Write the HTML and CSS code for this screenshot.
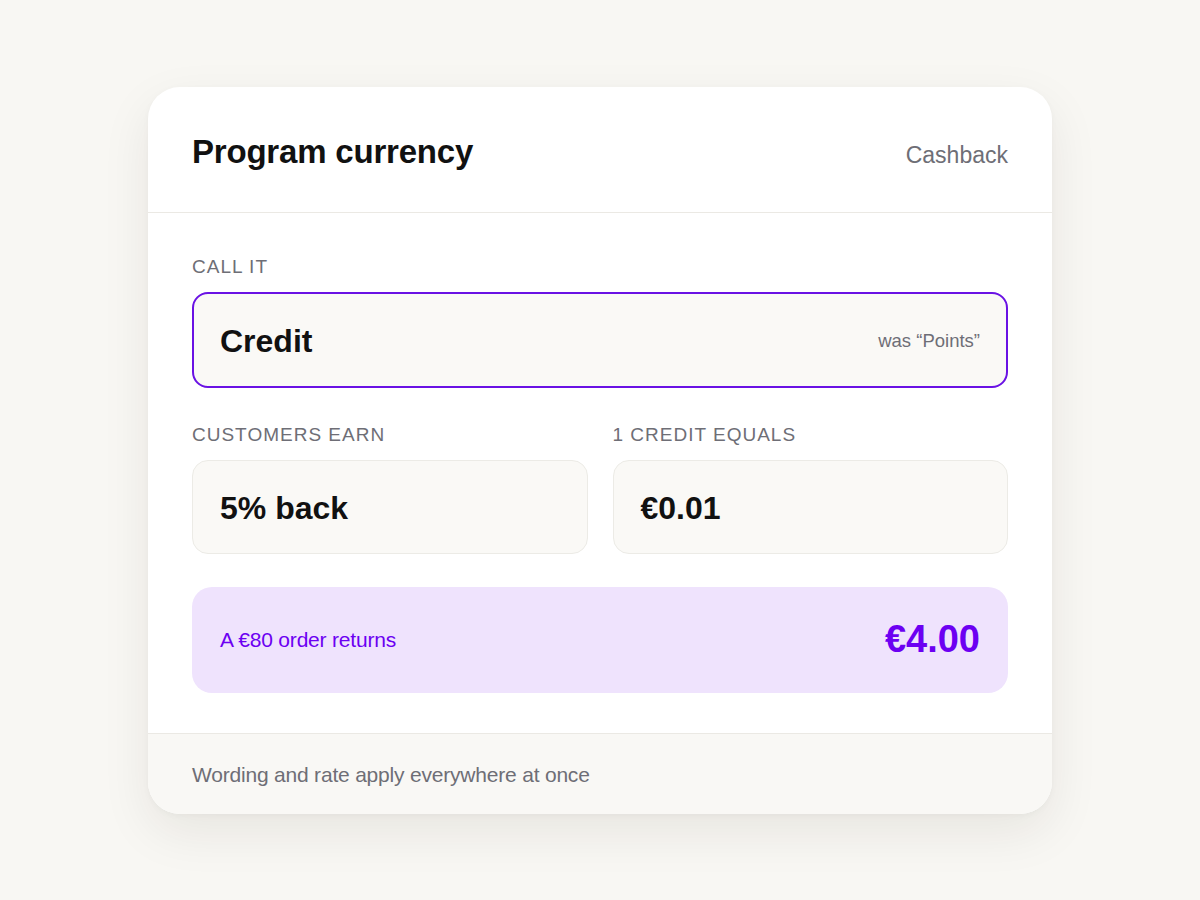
FILE: index.html
```html
<html>
<head>
  <meta charset="UTF-8" />
  <meta name="viewport" content="width=device-width, initial-scale=1.0"/>
  <title>Program currency</title>
  <link rel="stylesheet" href="styles.css">
</head>
<body>
  <div class="card">
    <div class="card-header">
      <h1>Program currency</h1>
      <span class="header-mode">Cashback</span>
    </div>

    <div class="card-body">
      <div class="field">
        <div class="field-label">Call it</div>
        <div class="input input-active">
          <span class="input-value">Credit</span>
          <span class="input-hint">was “Points”</span>
        </div>
      </div>

      <div class="field-row">
        <div class="field">
          <div class="field-label">Customers earn</div>
          <div class="input">
            <span class="input-value">5% back</span>
          </div>
        </div>
        <div class="field">
          <div class="field-label">1 credit equals</div>
          <div class="input">
            <span class="input-value">€0.01</span>
          </div>
        </div>
      </div>

      <div class="preview">
        <span class="preview-label">A €80 order returns</span>
        <span class="preview-amount">€4.00</span>
      </div>
    </div>

    <div class="card-footer">Wording and rate apply everywhere at once</div>
  </div>
</body>
</html>
```

FILE: styles.css
```css
body {
  margin: 0;
  height: 100vh;
  background-color: #f8f7f3;
  font-family: 'Liberation Sans', Arial, sans-serif;
  color: #111;
  display: flex;
  justify-content: center;
  align-items: center;
}

.card {
  width: 904px;
  background: #fff;
  border-radius: 32px;
  box-shadow: 0 18px 50px rgba(40, 30, 10, 0.08), 0 2px 6px rgba(40, 30, 10, 0.03);
  overflow: hidden;
}

.card-header {
  display: flex;
  justify-content: space-between;
  align-items: baseline;
  padding: 45px 44px 40px;
  border-bottom: 1px solid #ebe9e4;
}

h1 {
  margin: 0;
  font-size: 33px;
  line-height: 40px;
  font-weight: 700;
  letter-spacing: -0.2px;
}

.header-mode {
  font-size: 23px;
  color: #6e6e76;
}

.card-body {
  padding: 42px 44px 40px;
}

.field-label {
  font-size: 19px;
  line-height: 24px;
  letter-spacing: 1px;
  text-transform: uppercase;
  color: #6e6e76;
  margin-bottom: 13px;
}

.input {
  height: 94px;
  box-sizing: border-box;
  display: flex;
  justify-content: space-between;
  align-items: center;
  padding: 3px 27px 0;
  background: #faf9f6;
  border: 1.5px solid #ecebe6;
  border-radius: 16px;
}

.input-active {
  height: 96px;
  padding: 3px 26px 0;
  border: 2px solid #6a12e4;
}

.input-value {
  font-size: 32px;
  font-weight: 700;
}

.input-hint {
  font-size: 18.5px;
  color: #6e6e76;
}

.field-row {
  display: grid;
  grid-template-columns: 1fr 1fr;
  gap: 25px;
  margin-top: 35px;
}

.preview {
  margin-top: 33px;
  height: 106px;
  display: flex;
  justify-content: space-between;
  align-items: center;
  padding: 0 28px;
  background: #efe3fd;
  border-radius: 20px;
  color: #6c00f2;
}

.preview-label {
  font-size: 21px;
  letter-spacing: -0.2px;
}

.preview-amount {
  font-size: 38px;
  font-weight: 700;
}

.card-footer {
  height: 81px;
  box-sizing: border-box;
  display: flex;
  align-items: center;
  padding: 2px 44px 0;
  background: #f9f8f5;
  border-top: 1px solid #ebe9e4;
  font-size: 21px;
  letter-spacing: -0.2px;
  color: #6e6e76;
}
```
